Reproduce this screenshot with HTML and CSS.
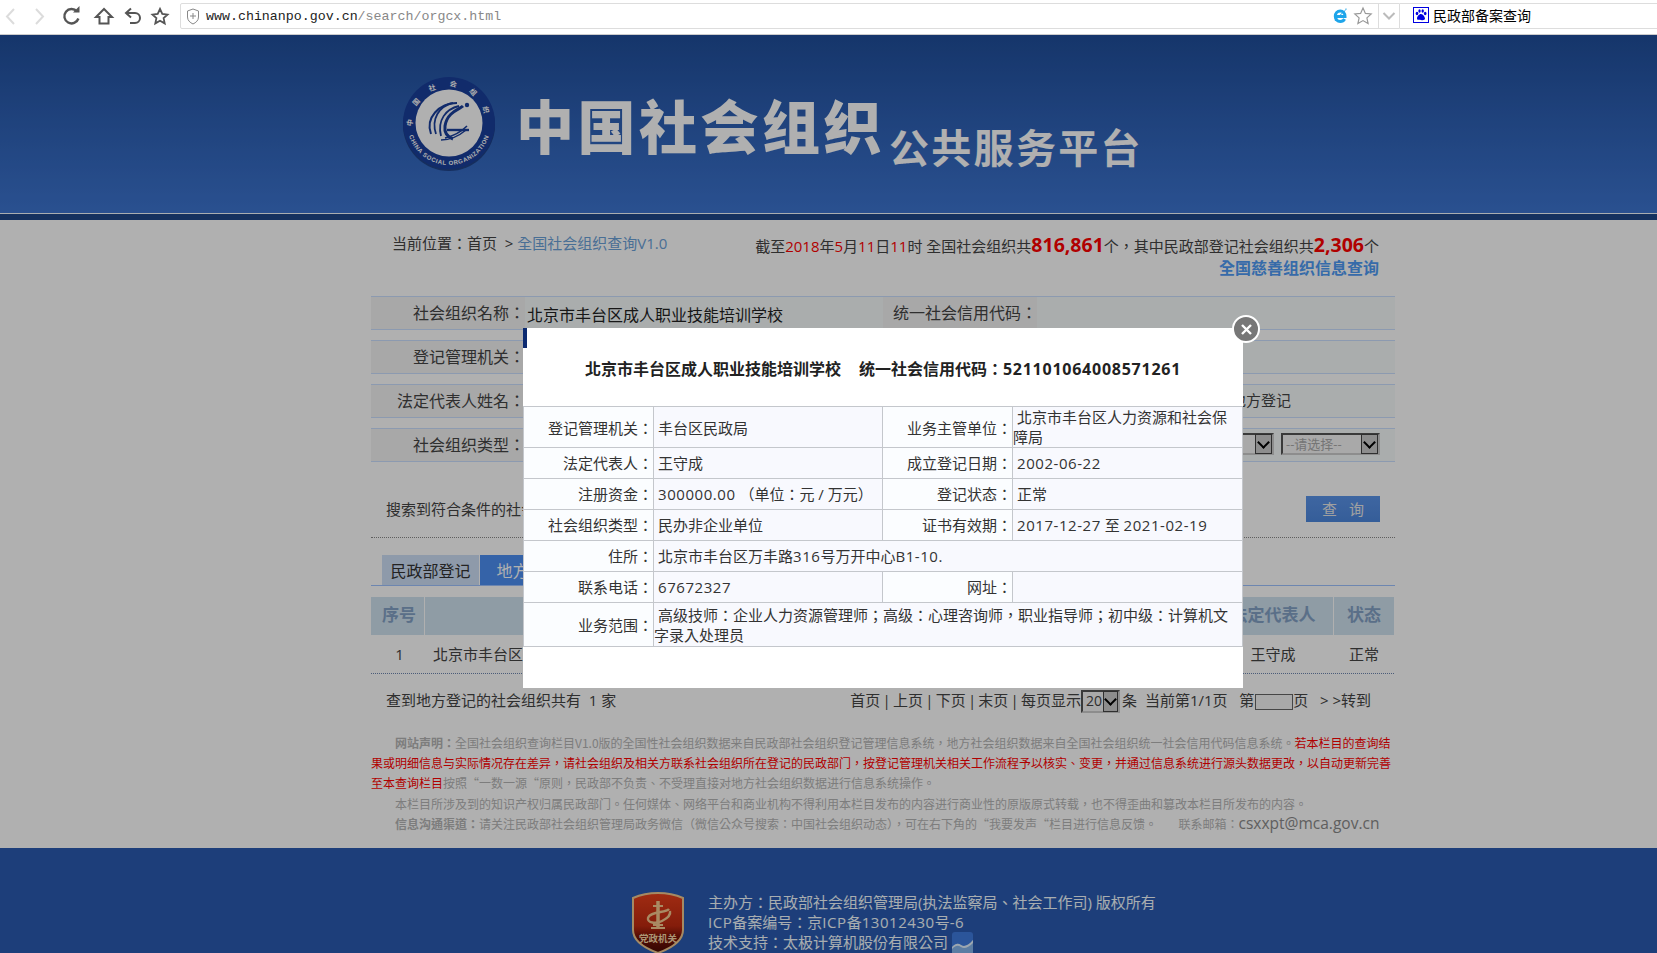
FILE: index.html
```html
<!DOCTYPE html>
<html>
<head>
    <meta charset="UTF-8">
    <title>全国社会组织查询</title>
    <link rel="stylesheet" href="styles.css">
</head>
<body>
    <!-- browser toolbar -->
    <div class="toolbar">
        <svg class="tool-icons" width="176" height="34" viewBox="0 0 176 34" fill="none">
            <path d="M14 9l-7 7.5 7 7.500" stroke="#dcdcdc" stroke-width="2"/>
            <path d="M36 9l7 7.5-7 7.500" stroke="#dcdcdc" stroke-width="2"/>
            <path d="M77 11.5a7.2 7.2 0 1 0 1.4 7" stroke="#555" stroke-width="2.400"/>
            <path d="M73 12.5h6.5V6z" fill="#555"/>
            <path d="M104 9l-8 8h3.500v6.500h9V17h3.500z" stroke="#555" stroke-width="2"/>
            <path d="M127 13h8a4.500 4.500 0 0 1 0 10h-5" stroke="#555" stroke-width="2"/>
            <path d="M131 8.500l-5 4.500 5 4.500" stroke="#555" stroke-width="2"/>
            <path d="M160 9l2.300 5 5.200.6-3.900 3.500 1.100 5.300-4.700-2.700-4.700 2.700 1.100-5.300-3.900-3.500 5.200-.6z" stroke="#555" stroke-width="1.800"/>
        </svg>
        <div class="address">
            <svg width="14" height="17" viewBox="0 0 14 17" fill="none">
                <path d="M7 1l5.500 2v6c0 3.500-2.500 5.500-5.500 7-3-1.500-5.500-3.500-5.500-7V3z" stroke="#888"/>
                <path d="M7 5v6M4 8h6" stroke="#888"/>
            </svg>
            <span class="url"><b>www.chinanpo.gov.cn</b>/search/orgcx.html</span>
            <svg class="ie-icon" width="16" height="18" viewBox="0 0 16 18" fill="none">
                <path d="M3.500 9.500h9.500c0-3.500-2-5.500-4.700-5.500-3 0-5 2.300-5 5.300s2 5.200 5 5.200c2 0 3.500-1 4.300-2.500" stroke="#1ea5ea" stroke-width="3"/>
                <path d="M14 1.500c1.500 1.500-8 7-11 12.500" stroke="#1ea5ea"/>
            </svg>
            <svg class="fav-icon" width="20" height="20" viewBox="0 0 20 20" fill="none">
                <path d="M10 2l2.400 5.400 5.800.6-4.300 3.900 1.200 5.700-5.100-3-5.100 3 1.200-5.700L1.800 8l5.800-.6z" stroke="#999" stroke-width="1.200"/>
            </svg>
            <svg class="drop-icon" width="14" height="10" viewBox="0 0 14 10" fill="none">
                <path d="M1.500 2l5.500 5.500L12.500 2" stroke="#bbb" stroke-width="2"/>
            </svg>
        </div>
        <div class="search-box">
            <svg width="16" height="16" viewBox="0 0 16 16">
                <rect x=".5" y=".5" width="15" height="15" fill="#fff" stroke="#0000e0"/>
                <g fill="#0000e0">
                    <ellipse cx="4" cy="6.500" rx="1.300" ry="1.800"/>
                    <ellipse cx="6.500" cy="4" rx="1.200" ry="1.700"/>
                    <ellipse cx="9.700" cy="4" rx="1.200" ry="1.700"/>
                    <ellipse cx="12.200" cy="6.500" rx="1.300" ry="1.800"/>
                    <path d="M8 7c2 0 4 3 4 4.500S10 13.500 8 13s-4 .5-4-1.500S6 7 8 7z"/>
                </g>
            </svg>
            <span>民政部备案查询</span>
        </div>
    </div>

    <div class="page">
        <header class="site-header">
            <div class="brand">
                <svg class="logo" width="96" height="96" viewBox="0 0 96 96">
                    <defs>
                        <path id="ringTop" d="M20.400 70.100A36 36 0 1 1 75.600 70.100"/>
                        <path id="ringBottom" d="M6 47a42 42 0 0 0 84 0"/>
                    </defs>
                    <circle cx="48" cy="49" r="46" fill="#0a1c50" opacity=".5"/>
                    <circle cx="48" cy="47" r="46" fill="#1a3f9c"/>
                    <circle cx="48" cy="47" r="33.500" fill="#fff"/>
                    <text class="ring-cn"><textPath href="#ringTop" startOffset="50%" text-anchor="middle">中国社会组织</textPath></text>
                    <text class="ring-en"><textPath href="#ringBottom" startOffset="50%" text-anchor="middle">CHINA SOCIAL ORGANIZATION</textPath></text>
                    <g fill="none" stroke="#1a3f9c">
                        <path d="M56 27C38 27 24 42 30 58" stroke-width="2"/>
                        <path d="M52 27C38 30 30 43 35 58" stroke-width="1.800"/>
                        <path d="M58 30C45 33 36 44 40 60" stroke-width="1.800"/>
                        <path d="M62 30c-3 3-16 6-18 20-1 7 3 11 8 13" stroke-width="3"/>
                        <path d="M44 62c8-2 16-6 22-12M40 64c8 0 18-4 25-10" stroke-width="1.600"/>
                        <path d="M46 54h22" stroke-width="2.400"/>
                    </g>
                    <circle cx="66" cy="29" r="2.200" fill="#1a3f9c"/>
                </svg>
                <span class="brand-title">中国社会组织</span>
                <span class="brand-sub">公共服务平台</span>
            </div>
        </header>

        <main class="content">
            <div class="top-info">
                <div class="crumbs">当前位置：首页 &nbsp;&gt; <a>全国社会组织查询V1.0</a></div>
                <div class="stats">
                    <p>截至<em>2018</em>年<em>5</em>月<em>11</em>日<em>11</em>时 全国社会组织共<strong>816,861</strong>个，其中民政部登记社会组织共<strong>2,306</strong>个</p>
                    <a class="charity">全国慈善组织信息查询</a>
                </div>
            </div>

            <div class="query-row">
                <label>社会组织名称：</label>
                <span class="query-value wide">北京市丰台区成人职业技能培训学校</span>
                <label class="label-right">统一社会信用代码：</label>
            </div>
            <div class="query-row">
                <label>登记管理机关：</label>
            </div>
            <div class="query-row">
                <label>法定代表人姓名：</label>
                <span class="query-end">民政部登记&nbsp;&nbsp;地方登记</span>
            </div>
            <div class="query-row">
                <label>社会组织类型：</label>
                <div class="query-selects">
                    <div class="fake-select"><span>--请选择--</span><i></i></div>
                    <div class="fake-select"><span>--请选择--</span><i></i></div>
                </div>
            </div>

            <div class="search-bar">
                <span>搜索到符合条件的社会组织</span>
                <button class="search-btn">查 询</button>
            </div>

            <div class="tabs">
                <span class="tab">民政部登记</span>
                <span class="tab active">地方登记</span>
            </div>

            <div class="result-head">
                <span class="col-no">序号</span>
                <span class="col-name">社会组织名称</span>
                <span class="col-person">法定代表人</span>
                <span class="col-state">状态</span>
            </div>
            <div class="result-row">
                <span class="col-no">1</span>
                <span class="col-name">北京市丰台区成人职业技能培训学校</span>
                <span class="col-person">王守成</span>
                <span class="col-state">正常</span>
            </div>

            <div class="pager">
                <span>查到地方登记的社会组织共有 &nbsp;1 家</span>
                <div class="pager-links">
                    <span class="pages">首页 | 上页 | 下页 | 末页 | 每页显示</span><div class="fake-select small"><span>20</span><i></i></div>条 &nbsp;当前第1/1页 &nbsp;&nbsp;第<span class="page-input"></span>页 &nbsp;&nbsp;&gt; &gt;转到
                </div>
            </div>

            <div class="notice">
                <p class="indent"><b>网站声明：</b>全国社会组织查询栏目V1.0版的全国性社会组织数据来自民政部社会组织登记管理信息系统，地方社会组织数据来自全国社会组织统一社会信用代码信息系统。<em>若本栏目的查询结果或明细信息与实际情况存在差异，请社会组织及相关方联系社会组织所在登记的民政部门，按登记管理机关相关工作流程予以核实、变更，并通过信息系统进行源头数据更改，以自动更新完善至本查询栏目</em>按照“一数一源“原则，民政部不负责、不受理直接对地方社会组织数据进行信息系统操作。</p>
                <p class="indent">本栏目所涉及到的知识产权归属民政部门。任何媒体、网络平台和商业机构不得利用本栏目发布的内容进行商业性的原版原式转载，也不得歪曲和篡改本栏目所发布的内容。</p>
                <p class="indent"><b>信息沟通渠道：</b>请关注民政部社会组织管理局政务微信（微信公众号搜索：中国社会组织动态），可在右下角的“我要发声“栏目进行信息反馈。 &nbsp;&nbsp;&nbsp;&nbsp;&nbsp;&nbsp; 联系邮箱：<span class="mail">csxxpt@mca.gov.cn</span></p>
            </div>
        </main>

        <footer class="site-footer">
            <svg class="badge" width="52" height="62" viewBox="0 0 52 62">
                <defs>
                    <linearGradient id="badgeFill" x1="0" y1="0" x2="0" y2="1">
                        <stop offset="0" stop-color="#e8401c"/>
                        <stop offset=".55" stop-color="#c02a10"/>
                        <stop offset=".72" stop-color="#7c1408"/>
                        <stop offset="1" stop-color="#4a0a04"/>
                    </linearGradient>
                </defs>
                <path d="M26 1c8 0 17 1.500 25 5v32c0 12-14 19-25 23C15 57 1 50 1 38V6c8-3.500 17-5 25-5z" fill="url(#badgeFill)" stroke="#f0c890" stroke-width="2"/>
                <g fill="none" stroke="#f5c890">
                    <path d="M26 9v26" stroke-width="3.500"/>
                    <path d="M19 36h14M21 33h10" stroke-width="2"/>
                    <path d="M37 17c-3 4-19 2-21 9-1 5 8 6 14 3 6-3 9-6 8-10" stroke-width="2.400"/>
                    <path d="M21 14h10" stroke-width="2"/>
                </g>
                <text x="26" y="50" class="badge-text">党政机关</text>
            </svg>
            <div class="footer-text">
                <p>主办方：民政部社会组织管理局(执法监察局、社会工作司) 版权所有</p>
                <p><span class="num">ICP</span>备案编号：京<span class="num">ICP</span>备<span class="num">13012430</span>号<span class="num">-6</span></p>
                <p>技术支持：太极计算机股份有限公司
                    <svg class="chart-icon" width="21" height="21" viewBox="0 0 21 21">
                        <rect width="21" height="21" rx="3" fill="#3f7ce0"/>
                        <path d="M0 15c4-4 6-4 9-2s7 1 12-5v13H0z" fill="#86b6ec"/>
                        <path d="M0 15c4-4 6-4 9-2s7 1 12-5v3c-5 5-9 6-12 4s-5-2-9 2z" fill="#e4f2ff"/>
                    </svg>
                </p>
            </div>
        </footer>

        <div class="mask"></div>

        <div class="dialog">
            <button class="dialog-close"><svg width="13" height="13" viewBox="0 0 13 13"><path d="M2 2l9 9M11 2l-9 9" stroke="#fff" stroke-width="2.400"/></svg></button>
            <h3 class="dialog-title"><span>北京市丰台区成人职业技能培训学校</span><span>统一社会信用代码：<span class="code">521101064008571261</span></span></h3>
            <table class="detail">
                <colgroup>
                    <col class="c-label"><col class="c-value"><col class="c-label"><col>
                </colgroup>
                <tr class="h-tall">
                    <th>登记管理机关：</th><td>丰台区民政局</td>
                    <th>业务主管单位：</th><td class="flush"><span class="lead">北京市丰台区人力资源和社会保障局</span></td>
                </tr>
                <tr>
                    <th>法定代表人：</th><td>王守成</td>
                    <th>成立登记日期：</th><td><span class="num">2002-06-22</span></td>
                </tr>
                <tr>
                    <th>注册资金：</th><td><span class="num">300000.00</span> （单位：元 / 万元）</td>
                    <th>登记状态：</th><td>正常</td>
                </tr>
                <tr>
                    <th>社会组织类型：</th><td>民办非企业单位</td>
                    <th>证书有效期：</th><td><span class="num">2017-12-27</span> 至 <span class="num">2021-02-19</span></td>
                </tr>
                <tr>
                    <th>住所：</th><td colspan="3">北京市丰台区万丰路<span class="num">316</span>号万开中心<span class="num">B1-10.</span></td>
                </tr>
                <tr>
                    <th>联系电话：</th><td><span class="num">67672327</span></td>
                    <th>网址：</th><td></td>
                </tr>
                <tr class="h-scope">
                    <th>业务范围：</th><td colspan="3" class="flush"><span class="lead">高级技师：企业人力资源管理师；高级：心理咨询师，职业指导师；初中级：计算机文字录入处理员</span></td>
                </tr>
            </table>
        </div>
    </div>
</body>
</html>
```

FILE: styles.css
```css
* {
    box-sizing: border-box;
}
html, body {
    margin: 0;
    height: 953px;
    overflow: hidden;
}
body {
    font-family: "Open Sans", "Noto Sans CJK TC", sans-serif;
    font-size: 15px;
    color: #444;
    background-color: #fff;
}
p {
    margin: 0;
}
em {
    font-style: normal;
}
.num {
    letter-spacing: .55px;
}

/* browser toolbar */
.toolbar {
    display: flex;
    height: 35px;
    padding-top: 3px;
    background-color: #fff;
    border-bottom: 1px solid #ccc;
}
.tool-icons {
    flex: none;
    margin: -3px 4px 0 0;
}
.address {
    display: flex;
    align-items: center;
    width: 1220px;
    height: 26px;
    padding-left: 5px;
    border: 1px solid #ddd;
    border-radius: 2px 0 0 2px;
}
.url {
    margin-left: 6px;
    font-family: "Liberation Mono", monospace;
    font-size: 13.3px;
    color: #888;
}
.url b {
    font-weight: normal;
    color: #222;
}
.ie-icon {
    margin-left: auto;
}
.fav-icon {
    margin: 0 5px 0 5px;
}
.drop-icon {
    box-sizing: content-box;
    padding: 8px 3px;
    border-left: 1px solid #ddd;
}
.search-box {
    display: flex;
    align-items: center;
    gap: 4px;
    padding: 0 0 2px 13px;
    height: 26px;
    font-family: "Noto Sans CJK SC", sans-serif;
    font-size: 14px;
    color: #000;
    flex: 1;
    border-top: 1px solid #ddd;
    border-bottom: 1px solid #ddd;
}

/* page */
.page {
    position: relative;
    height: 918px;
    overflow: hidden;
    background-color: #fff;
}
.site-header {
    height: 185px;
    background: linear-gradient(#204e9b, #3d75d1 178px, #f5fbff 178px, #f5fbff 179px, #1f478a 179px);
}
.brand {
    display: flex;
    padding: 41px 0 0 401px;
}
.logo {
    flex: none;
}
.ring-cn {
    font-size: 7px;
    font-weight: 700;
    fill: #fff;
    letter-spacing: 13px;
}
.ring-en {
    font-size: 6px;
    font-weight: 700;
    fill: #fff;
    font-family: "Liberation Sans", sans-serif;
    letter-spacing: .6px;
}
.brand-title {
    margin: 13px 0 0 19px;
    font-family: "Noto Sans CJK SC", sans-serif;
    font-size: 58px;
    font-weight: 900;
    line-height: 70px;
    letter-spacing: 3.500px;
    color: #fff;
}
.brand-sub {
    margin: 44px 0 0 4px;
    font-family: "Noto Sans CJK SC", sans-serif;
    font-size: 40px;
    font-weight: 700;
    line-height: 52px;
    letter-spacing: 2.300px;
    color: #fff;
}

.content {
    width: 1024px;
    margin-left: 371px;
}
.top-info {
    display: flex;
    justify-content: space-between;
    height: 76px;
}
.crumbs {
    padding: 12px 0 0 21px;
    line-height: 22px;
}
.crumbs a {
    color: #6ba1d8;
}
.stats {
    padding: 13px 16px 0 0;
    text-align: right;
    line-height: 24px;
}
.stats em {
    color: #f00;
}
.stats strong {
    font-size: 19.500px;
    color: #f00;
}
.charity {
    display: block;
    margin-top: 1px;
    font-size: 16px;
    font-weight: 700;
    line-height: 18px;
    color: #4f9bf5;
}

.query-row {
    display: flex;
    align-items: stretch;
    height: 34px;
    margin-bottom: 10px;
    background-color: #f6fbfb;
    border-top: 1px solid #cbe0ff;
    border-bottom: 1px solid #cbe0ff;
    font-size: 16px;
    line-height: 32px;
}
.query-row label {
    width: 154px;
    text-align: right;
    background-color: #f3f3f3;
}
.query-row .label-right {
    padding-left: 10px;
    width: 154px;
    text-align: left;
    white-space: nowrap;
}
.query-value {
    padding-left: 2px;
    line-height: 36px;
    color: #222;
}
.query-value.wide {
    width: 358px;
}
.query-end {
    margin-left: auto;
    padding-right: 104px;
    font-size: 15px;
    line-height: 30px;
    color: #444;
}
.query-selects {
    display: flex;
    gap: 7px;
    margin: 4px 15px 0 auto;
}
.fake-select {
    display: inline-flex;
    justify-content: space-between;
    width: 99px;
    height: 22px;
    padding-left: 3px;
    border: 2px solid #555;
    border-right-color: #ccc;
    border-bottom-color: #ccc;
    background-color: #f5f5f5;
    color: #aaa;
    font-size: 13px;
    line-height: 18px;
}
.fake-select i {
    position: relative;
    flex: none;
    width: 17px;
    margin: -1px 0;
    background-color: #ccc;
    border: 1px solid #444;
}
.fake-select i::after {
    content: "";
    position: absolute;
    left: 3px;
    top: 3px;
    width: 7px;
    height: 7px;
    border-right: 2px solid #000;
    border-bottom: 2px solid #000;
    transform: rotate(45deg);
}
.query-selects .fake-select:first-child {
    width: 100px;
}

.search-bar {
    display: flex;
    align-items: center;
    justify-content: space-between;
    height: 66px;
    padding: 8px 15px 0 15px;
    border-bottom: 1px dotted #888;
}
.search-btn {
    width: 74px;
    height: 26px;
    padding: 0 0 0 4px;
    border: none;
    font-family: inherit;
    font-size: 15px;
    letter-spacing: 4px;
    color: #e8e8e8;
    background: linear-gradient(#5b95ea, #4d88de);
}

.tabs {
    display: flex;
    height: 48px;
    padding: 17px 0 0 11px;
    border-bottom: 1px solid #9ec2ff;
}
.tab {
    width: 97px;
    height: 30px;
    line-height: 32px;
    text-align: center;
    font-size: 16px;
    background-color: #cedff6;
    color: #333;
}
.tab.active {
    background-color: #4d90f3;
    color: #fff;
    margin-left: 1px;
}

.result-head, .result-row {
    display: flex;
    gap: 1px;
    width: 1023px;
}
.result-head {
    margin-top: 11px;
    height: 38px;
    font-size: 17px;
    font-weight: 700;
    line-height: 36px;
    color: #83a1c5;
}
.result-head span {
    background-color: #cfe2f0;
}
.result-head .col-no {
    padding-left: 3px;
}
.result-row {
    height: 39px;
    line-height: 39px;
    font-size: 15px;
    border-bottom: 1px dotted #6d86b0;
}
.col-no {
    width: 53px;
    text-align: center;
}
.result-row .col-no {
    padding-left: 4px;
}
.col-name {
    flex: 1;
    padding-left: 8px;
}
.result-head .col-name {
    text-align: center;
}
.col-person {
    width: 120px;
    text-align: center;
}
.col-state {
    width: 60px;
    text-align: center;
}

.pager {
    display: flex;
    justify-content: space-between;
    height: 59px;
    padding: 15px 24px 0 15px;
    line-height: 22px;
}
.pager-links {
    white-space: nowrap;
}
.pages {
    word-spacing: -1.650px;
}
.fake-select.small {
    width: 39px;
    height: 23px;
    margin-right: 2px;
    vertical-align: middle;
    color: #444;
    font-size: 14px;
}
.fake-select.small i {
    width: 15px;
}
.fake-select.small i::after {
    left: 2px;
}
.page-input {
    display: inline-block;
    width: 38px;
    height: 16px;
    margin-left: 1px;
    vertical-align: middle;
    border: 1px solid #666;
    background-color: #f5f5f5;
}

.notice {
    font-family: "Noto Sans CJK TC", sans-serif;
    font-size: 12px;
    line-height: 20.200px;
    color: #b5b5b5;
    margin-right: 1px;
}
.notice em {
    color: #f00;
}
.notice .indent {
    text-indent: 24px;
}
.notice .mail {
    font-family: "Open Sans", sans-serif;
    font-size: 15.500px;
    line-height: 1;
    color: #8a8a8a;
}

.site-footer {
    position: absolute;
    left: 0;
    right: 0;
    top: 813px;
    bottom: 0;
    display: flex;
    gap: 24px;
    padding: 44px 0 0 632px;
    background-color: #2b5bb1;
}
.badge {
    flex: none;
}
.badge-text {
    font-size: 9.500px;
    font-weight: 700;
    fill: #f8d8a8;
    text-anchor: middle;
}
.footer-text {
    font-size: 15px;
    line-height: 19.500px;
    color: #f4fbff;
    margin-top: 1px;
}
.chart-icon {
    vertical-align: -5px;
}

/* dialog on top of the page */
.mask {
    position: absolute;
    inset: 0;
    background-color: rgba(0, 0, 0, 0.31);
}
.dialog {
    position: absolute;
    left: 523px;
    top: 293px;
    width: 720px;
    height: 360px;
    background-color: #fff;
    color: #333;
}
.dialog::before {
    content: "";
    position: absolute;
    left: 0;
    top: 0;
    width: 4px;
    height: 20px;
    background-color: #0c2a70;
}
.dialog-close {
    position: absolute;
    right: -17px;
    top: -13px;
    display: flex;
    align-items: center;
    justify-content: center;
    width: 28px;
    height: 28px;
    padding: 0;
    border: 2px solid #fff;
    border-radius: 50%;
    background-color: #777;
}
.dialog-title {
    display: flex;
    justify-content: center;
    gap: 18px;
    height: 78px;
    margin: 0;
    font-size: 16px;
    font-weight: 700;
    line-height: 82px;
    color: #222;
}
.dialog-title .code {
    letter-spacing: .75px;
}
.detail {
    width: 100%;
    table-layout: fixed;
    border-collapse: collapse;
    font-size: 15px;
    line-height: 20px;
}
.c-label {
    width: 130px;
}
.c-value {
    width: 229px;
}
.detail tr {
    height: 31px;
}
.detail tr.h-tall {
    height: 40px;
}
.detail tr.h-tall > * {
    padding-top: 2px;
}
.detail tr.h-scope {
    height: 44px;
}
.detail th, .detail td {
    padding: 0 4px;
    border: 1px solid #c4c7cc;
    font-weight: normal;
}
.detail th {
    padding: 0;
    text-align: right;
    background-color: #fbfdff;
}
.detail td {
    background-color: #f8f9fe;
}
.detail td.flush {
    padding: 0;
}
.lead {
    display: block;
    text-indent: 4px;
    padding-right: 10px;
}
```
